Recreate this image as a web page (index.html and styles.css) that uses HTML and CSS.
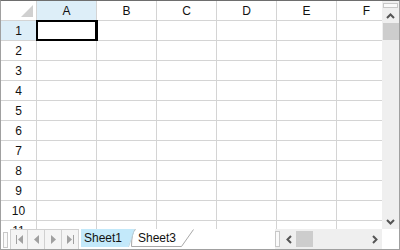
FILE: index.html
```html
<!DOCTYPE html>
<html lang="en">
<head>
  <meta charset="UTF-8">
  <title>Spreadsheet</title>
  <link rel="stylesheet" href="styles.css">
</head>
<body>
  <div class="sheet">
    <div class="cells">
      <table class="grid">
        <tr class="head-row">
          <th class="corner"><span class="corner-mark"></span></th>
          <th class="col-head active">A</th>
          <th class="col-head">B</th>
          <th class="col-head">C</th>
          <th class="col-head">D</th>
          <th class="col-head">E</th>
          <th class="col-head">F</th>
        </tr>
        <tr><th class="row-head active">1</th><td class="selected"></td><td></td><td></td><td></td><td></td><td></td></tr>
        <tr><th class="row-head">2</th><td></td><td></td><td></td><td></td><td></td><td></td></tr>
        <tr><th class="row-head">3</th><td></td><td></td><td></td><td></td><td></td><td></td></tr>
        <tr><th class="row-head">4</th><td></td><td></td><td></td><td></td><td></td><td></td></tr>
        <tr><th class="row-head">5</th><td></td><td></td><td></td><td></td><td></td><td></td></tr>
        <tr><th class="row-head">6</th><td></td><td></td><td></td><td></td><td></td><td></td></tr>
        <tr><th class="row-head">7</th><td></td><td></td><td></td><td></td><td></td><td></td></tr>
        <tr><th class="row-head">8</th><td></td><td></td><td></td><td></td><td></td><td></td></tr>
        <tr><th class="row-head">9</th><td></td><td></td><td></td><td></td><td></td><td></td></tr>
        <tr><th class="row-head">10</th><td></td><td></td><td></td><td></td><td></td><td></td></tr>
        <tr><th class="row-head">11</th><td></td><td></td><td></td><td></td><td></td><td></td></tr>
      </table>
    </div>

    <div class="vscroll">
      <div class="grip-h"></div>
      <div class="arrow">
        <svg width="9" height="6" viewBox="0 0 9 6"><path d="M1 5 L4.5 1.5 L8 5" fill="none" stroke="#555" stroke-width="2"/></svg>
      </div>
      <div class="vthumb"></div>
      <div class="vtrack"></div>
      <div class="arrow">
        <svg width="9" height="6" viewBox="0 0 9 6"><path d="M1 1 L4.5 4.5 L8 1" fill="none" stroke="#555" stroke-width="2"/></svg>
      </div>
    </div>

    <div class="bottom">
      <div class="tabs">
        <div class="grip-v"></div>
        <div class="nav">
          <span class="nav-btn">
            <svg width="9" height="11" viewBox="0 0 9 11"><rect x="1" y="1" width="1" height="9" fill="#a0a0a0"/><path d="M8 1 L3 5.5 L8 10 Z" fill="#a0a0a0"/></svg>
          </span>
          <span class="nav-btn">
            <svg width="9" height="11" viewBox="0 0 9 11"><path d="M7 1 L2 5.5 L7 10 Z" fill="#a0a0a0"/></svg>
          </span>
          <span class="nav-btn">
            <svg width="9" height="11" viewBox="0 0 9 11"><path d="M2 1 L7 5.5 L2 10 Z" fill="#a0a0a0"/></svg>
          </span>
          <span class="nav-btn">
            <svg width="9" height="11" viewBox="0 0 9 11"><path d="M1 1 L6 5.5 L1 10 Z" fill="#a0a0a0"/><rect x="7" y="1" width="1" height="9" fill="#a0a0a0"/></svg>
          </span>
        </div>
        <div class="tab-strip">
          <svg class="tab-shapes" width="114" height="19" viewBox="0 0 114 19">
            <path d="M54.5 0.5 Q50.5 3 50.5 17.5 L100.5 17.5 L112.5 0.5" fill="#fff" stroke="#a8a8a8"/>
            <path d="M0 0 L53 0 L47 18 L0 18 Z" fill="#c3e9fa"/>
            <path d="M53.5 0 L47.5 18" fill="none" stroke="#b8d8e6"/>
          </svg>
          <span class="tab tab-active">Sheet1</span>
          <span class="tab">Sheet3</span>
        </div>
      </div>
      <div class="hscroll">
        <div class="grip-v"></div>
        <div class="arrow">
          <svg width="6" height="9" viewBox="0 0 6 9"><path d="M5 1 L1.5 4.5 L5 8" fill="none" stroke="#555" stroke-width="2"/></svg>
        </div>
        <div class="hthumb"></div>
        <div class="htrack"></div>
        <div class="arrow">
          <svg width="6" height="9" viewBox="0 0 6 9"><path d="M1 1 L4.5 4.5 L1 8" fill="none" stroke="#555" stroke-width="2"/></svg>
        </div>
      </div>
      <div class="corner-box"></div>
    </div>
  </div>
</body>
</html>
```

FILE: styles.css
```css
body {
  margin: 0;
  font-family: "Liberation Sans", Arial, sans-serif;
  background: #fff;
}
.sheet {
  width: 398px;
  height: 248px;
  border: 1px solid #a0a0a0;
  border-top-color: #6e6e6e;
  display: grid;
  grid-template-columns: 381px 17px;
  grid-template-rows: 228px 20px;
  overflow: hidden;
}
.cells {
  overflow: hidden;
  position: relative;
}
.grid {
  border-spacing: 0;
  table-layout: fixed;
  width: 396px;
}
.grid th, .grid td {
  border-right: 1px solid #d4d4d4;
  border-bottom: 1px solid #d4d4d4;
  padding: 0;
  height: 19px;
  font-weight: normal;
  font-size: 12px;
  color: #111;
}
.grid td {
  width: 59px;
}
.corner {
  width: 35px;
  position: relative;
}
.corner-mark {
  position: absolute;
  right: 3px;
  bottom: 3px;
  width: 0;
  height: 0;
  border-left: 12px solid transparent;
  border-bottom: 12px solid #d0d0d0;
}
.col-head {
  text-align: center;
  padding-top: 1px;
}
.row-head {
  text-align: center;
}
.active {
  background: #ddeef8;
}
.selected {
  position: relative;
}
.selected::after {
  content: "";
  position: absolute;
  left: -1px;
  top: -1px;
  right: -2px;
  bottom: -1px;
  border: 2px solid #000;
  border-right-width: 3px;
}

.vscroll {
  background: #efefef;
  display: flex;
  flex-direction: column;
  align-items: center;
}
.grip-h {
  width: 13px;
  height: 3px;
  border: 1px solid #c8c8c8;
  background: #fafafa;
  margin-top: 2px;
}
.vscroll .arrow {
  height: 15px;
  display: flex;
  align-items: center;
  justify-content: center;
}
.vthumb {
  width: 16px;
  height: 17px;
  background: #cdcdcd;
}
.vtrack {
  flex: 1;
}

.bottom {
  grid-column: 1 / 3;
  display: flex;
  height: 20px;
}
.tabs {
  width: 274px;
  display: flex;
  align-items: stretch;
  background: #fff;
}
.grip-v {
  width: 3px;
  height: 14px;
  margin: 3px 2px 0 2px;
  border: 1px solid #c8c8c8;
  background: #fafafa;
}
.nav {
  display: flex;
  height: 19px;
  border-top: 1px solid #d0d0d0;
}
.nav-btn {
  width: 16px;
  border-left: 1px solid #d0d0d0;
  display: flex;
  align-items: center;
  justify-content: center;
  background: #f4f4f4;
}
.nav-btn:last-child {
  border-right: 1px solid #d0d0d0;
}
.tab-strip {
  position: relative;
  margin-left: 2px;
  display: flex;
  height: 19px;
}
.tab-shapes {
  position: absolute;
  left: 0;
  top: 0;
}
.tab {
  position: relative;
  font-size: 12px;
  line-height: 18px;
  color: #111;
  padding-left: 3px;
  width: 51px;
}
.tab + .tab {
  padding-left: 3px;
}
.hscroll {
  width: 107px;
  display: flex;
  align-items: center;
  background: #efefef;
}
.hscroll .grip-v {
  margin: 0 2px 0 0;
  background: #fafafa;
}
.hscroll .arrow {
  width: 14px;
  display: flex;
  justify-content: center;
}
.hthumb {
  width: 17px;
  height: 16px;
  background: #cdcdcd;
}
.htrack {
  flex: 1;
}
.corner-box {
  width: 17px;
  background: #fff;
}
```
